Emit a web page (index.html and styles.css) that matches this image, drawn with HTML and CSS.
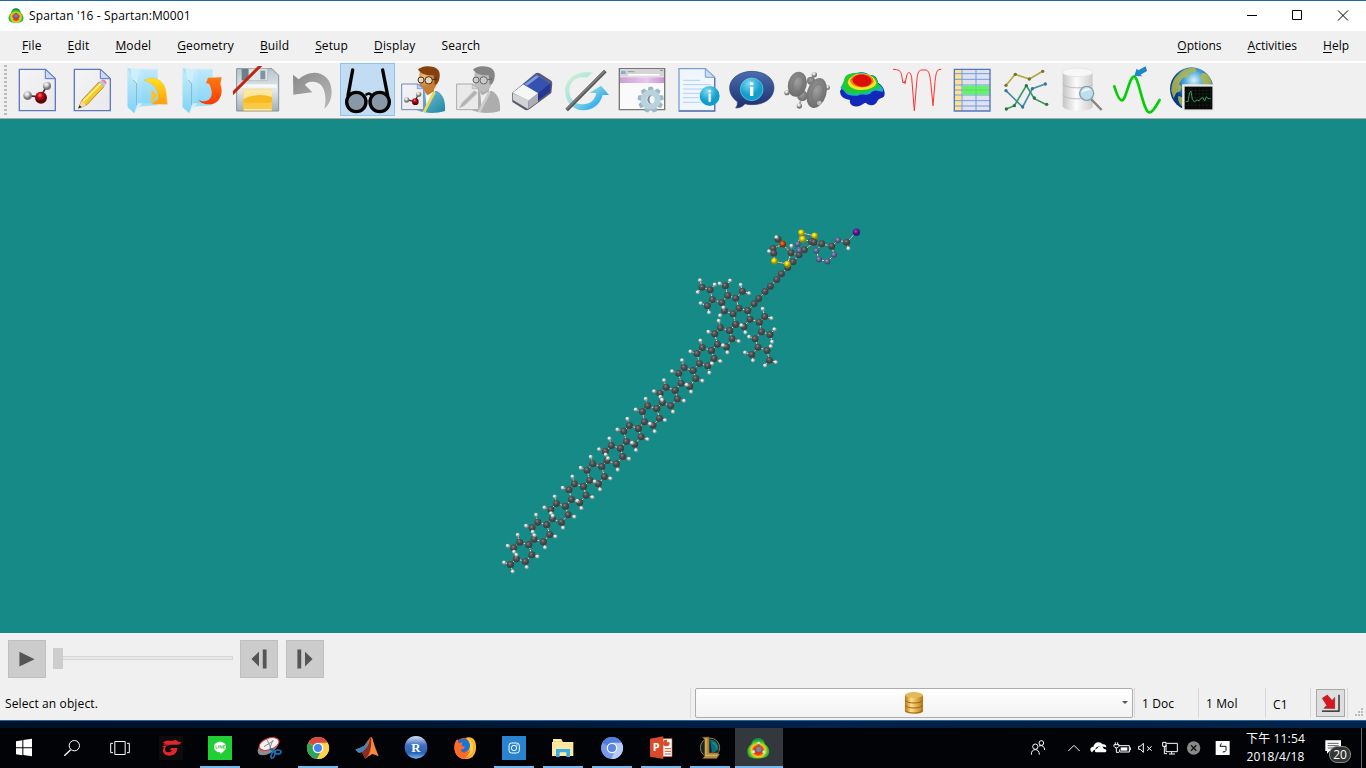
FILE: index.html
```html
<!DOCTYPE html>
<html lang="zh-Hant">
<head>
<meta charset="utf-8">
<title>Spartan '16 - Spartan:M0001</title>
<link rel="stylesheet" href="styles.css">
</head>
<body>
<svg class="defs" width="0" height="0" aria-hidden="true">
  <defs>
    <linearGradient id="paper" x1="0" y1="0" x2="1" y2="1"><stop offset="0" stop-color="#f4f4f6"/><stop offset="1" stop-color="#e9e9ed"/></linearGradient>
    <linearGradient id="folder" x1="0" y1="0" x2="0" y2="1"><stop offset="0" stop-color="#c9ecfa"/><stop offset="1" stop-color="#7fd3f8"/></linearGradient>
    <linearGradient id="yellow" x1="0" y1="0" x2="0" y2="1"><stop offset="0" stop-color="#ffe11a"/><stop offset="1" stop-color="#ff9c10"/></linearGradient>
    <linearGradient id="orange" x1="0" y1="0" x2="0" y2="1"><stop offset="0" stop-color="#ff7a10"/><stop offset="1" stop-color="#fb3a04"/></linearGradient>
    <linearGradient id="metal" x1="0" y1="0" x2="0" y2="1"><stop offset="0" stop-color="#b9c3ca"/><stop offset=".5" stop-color="#e3e9ec"/><stop offset="1" stop-color="#a4afb6"/></linearGradient>
    <linearGradient id="gray" x1="0" y1="0" x2="1" y2="1"><stop offset="0" stop-color="#898989"/><stop offset="1" stop-color="#b9b9b9"/></linearGradient>
    <linearGradient id="ring" x1="0" y1="0" x2="1" y2="1"><stop offset="0" stop-color="#d2f3d2"/><stop offset=".45" stop-color="#a6e2dc"/><stop offset=".75" stop-color="#3fb4ec"/><stop offset="1" stop-color="#37a9ea"/></linearGradient>
    <linearGradient id="barrel" x1="0" y1="0" x2="1" y2="0"><stop offset="0" stop-color="#c4c4c4"/><stop offset=".45" stop-color="#fcfcfc"/><stop offset="1" stop-color="#cdcdcd"/></linearGradient>
    <linearGradient id="gold" x1="0" y1="0" x2="1" y2="0"><stop offset="0" stop-color="#b87810"/><stop offset=".35" stop-color="#ffe08a"/><stop offset="1" stop-color="#b9750f"/></linearGradient>
    <linearGradient id="lilac" x1="0" y1="0" x2="1" y2="0"><stop offset="0" stop-color="#c8a0d2"/><stop offset=".6" stop-color="#eac6ee"/><stop offset="1" stop-color="#c994d0"/></linearGradient>
    <linearGradient id="shirt" x1="0" y1="0" x2="1" y2="1"><stop offset="0" stop-color="#7cc8d8"/><stop offset="1" stop-color="#1f86a4"/></linearGradient>
    <linearGradient id="bubble" x1="0" y1="0" x2="0" y2="1"><stop offset="0" stop-color="#4a6cae"/><stop offset="1" stop-color="#1d2f6e"/></linearGradient>
    <radialGradient id="ball" cx=".4" cy=".3"><stop offset="0" stop-color="#fff"/><stop offset=".5" stop-color="#ccc"/><stop offset="1" stop-color="#777"/></radialGradient>
    <radialGradient id="redball" cx=".4" cy=".3"><stop offset="0" stop-color="#f77"/><stop offset=".4" stop-color="#c8101a"/><stop offset="1" stop-color="#5f0008"/></radialGradient>
    <radialGradient id="face" cx=".3" cy=".3"><stop offset="0" stop-color="#f5bc75"/><stop offset="1" stop-color="#c87d33"/></radialGradient>
    <radialGradient id="info" cx=".4" cy=".25"><stop offset="0" stop-color="#7fdcf5"/><stop offset="1" stop-color="#119ecb"/></radialGradient>
    <radialGradient id="lobe" cx=".45" cy=".4" r=".6"><stop offset="0" stop-color="#a0a0a0"/><stop offset=".45" stop-color="#868686"/><stop offset="1" stop-color="#6c6c6c"/></radialGradient>
    <radialGradient id="globe" cx=".55" cy=".3"><stop offset="0" stop-color="#d9f4fb"/><stop offset=".45" stop-color="#49a4d8"/><stop offset="1" stop-color="#063b84"/></radialGradient>
    <radialGradient id="heat" cx=".5" cy=".6" r=".55"><stop offset="0" stop-color="#c8231a"/><stop offset=".38" stop-color="#e8401a"/><stop offset=".58" stop-color="#f2d21c"/><stop offset=".78" stop-color="#35c52a"/><stop offset="1" stop-color="#1a8a4a"/></radialGradient>
    <radialGradient id="c" cx=".4" cy=".35"><stop offset="0" stop-color="#8a8788"/><stop offset=".45" stop-color="#555"/><stop offset="1" stop-color="#3b4141"/></radialGradient>
    <radialGradient id="h" cx=".4" cy=".35"><stop offset="0" stop-color="#fff"/><stop offset=".5" stop-color="#dedada"/><stop offset="1" stop-color="#8b9696"/></radialGradient>
    <radialGradient id="n" cx=".4" cy=".35"><stop offset="0" stop-color="#9c9cc8"/><stop offset=".5" stop-color="#6a6a98"/><stop offset="1" stop-color="#444a6c"/></radialGradient>
    <radialGradient id="s" cx=".4" cy=".35"><stop offset="0" stop-color="#ffff9a"/><stop offset=".4" stop-color="#e9dc08"/><stop offset="1" stop-color="#8f8a08"/></radialGradient>
    <radialGradient id="p" cx=".4" cy=".35"><stop offset="0" stop-color="#f08040"/><stop offset=".5" stop-color="#cc4a0b"/><stop offset="1" stop-color="#7a2c08"/></radialGradient>
    <radialGradient id="i" cx=".4" cy=".35"><stop offset="0" stop-color="#a04ad0"/><stop offset=".5" stop-color="#6b1a9c"/><stop offset="1" stop-color="#3c1466"/></radialGradient>
    <linearGradient id="rblue" x1="0" y1="0" x2="0" y2="1"><stop offset="0" stop-color="#d4e2f6"/><stop offset=".4" stop-color="#3e70c0"/><stop offset=".75" stop-color="#2a62b8"/><stop offset="1" stop-color="#7cc0f4"/></linearGradient>
  </defs>
</svg>

<header class="titlebar">
  <svg class="app-icon" viewBox="0 0 48 48"><path d="M24 1c10 0 13 7 15 14 8 8 10 18 4 25-7 6-31 7-38 0-6-7-4-17 4-25C11 8 14 1 24 1z" fill="url(#heat)"/><path d="M24 14v12M24 25l-9 6M24 25l9 6" stroke="#4a4a5a" stroke-width="4"/><circle cx="24" cy="24" r="6" fill="#6688a0"/><circle cx="14" cy="31" r="3" fill="#bbb"/><circle cx="34" cy="31" r="3" fill="#bbb"/></svg>
  <h1 class="title">Spartan '16 - Spartan:M0001</h1>
  <svg class="window-controls" viewBox="0 0 138 30"><path d="M19 14.500h10M64.500 9.500h9v9h-9zM110 9.500l10 10M120 9.500l-10 10" fill="none" stroke="#000" stroke-width="1"/></svg>
</header>

<nav class="menubar">
  <span><u>F</u>ile</span><span><u>E</u>dit</span><span><u>M</u>odel</span><span><u>G</u>eometry</span><span><u>B</u>uild</span><span><u>S</u>etup</span><span><u>D</u>isplay</span><span>Sea<u>r</u>ch</span>
  <div class="menu-right"><span><u>O</u>ptions</span><span><u>A</u>ctivities</span><span><u>H</u>elp</span></div>
</nav>

<div class="toolbar">
  <div class="grip"></div>
  <svg class="tool" viewBox="30 189 165 159"><path d="M58 208h78l30 28v96H58z" fill="url(#paper)" stroke="#6078be" stroke-width="4"/><path d="M136 208v28h30z" fill="#c9dcf4" stroke="#6078be" stroke-width="3"/><path d="M84 287l38 4 18-33" stroke="#333" stroke-width="5" fill="none"/><circle cx="83" cy="287" r="13" fill="url(#ball)"/><circle cx="141" cy="258" r="12" fill="url(#ball)"/><circle cx="123" cy="293" r="18" fill="url(#redball)"/></svg>
  <svg class="tool" viewBox="195 189 165 159"><path d="M223 208h78l30 28v96h-108z" fill="url(#paper)" stroke="#6078be" stroke-width="4"/><path d="M301 208v28h30z" fill="#c9dcf4" stroke="#6078be" stroke-width="3"/><path d="M235 325l11-25 51-54 15 14-51 54z" fill="#f5ca28" stroke="#8f6a10" stroke-width="2"/><path d="M250 304l53-54" stroke="#ffef94" stroke-width="5"/><path d="M235 325l10-22 14 13z" fill="#f3d9ab"/><path d="M235 325l4-9 6 6z" fill="#222"/><path d="M297 246l7-6 14 13-7 8z" fill="#bfc5cc"/><path d="M304 240c6-6 20 4 14 13z" fill="#f17aa2"/></svg>
  <svg class="tool" viewBox="360 189 165 159"><path d="M383 205l42 4 47 1v106l-60 4-9 18-20-17z" fill="#a6def6"/><path d="M391 203l37 8-2 100-22 26z" fill="#d3f1fb" opacity=".85"/><path d="M383 206l17 35 10 10v68l-8 20-19-17z" fill="url(#folder)"/><path d="M420 206h53v104h-61V243z" fill="url(#folder)" opacity=".8"/><path d="M400 240l10 11v64" stroke="#55809c" stroke-width="1.500" fill="none"/><path d="M432 241c38-18 68 6 67 48l3 24-46-1 17-14c5-20-8-49-41-57z" fill="url(#yellow)" stroke="#f5ae1a" stroke-width="1"/><path d="M453 313l2-44 17 17z" fill="#ffc020"/></svg>
  <svg class="tool" viewBox="525 189 165 159"><path d="M548 205l42 4 47 1v106l-60 4-9 18-20-17z" fill="#a6def6"/><path d="M556 203l37 8-2 100-22 26z" fill="#d3f1fb" opacity=".85"/><path d="M548 206l17 35 10 10v68l-8 20-19-17z" fill="url(#folder)"/><path d="M585 206h53v104h-61V243z" fill="url(#folder)" opacity=".8"/><path d="M565 240l10 11v64" stroke="#55809c" stroke-width="1.500" fill="none"/><path d="M596 299c20 11 42 2 39-25-1-9-5-17-8-23l-9-1 6-17 41-1-4 20c12 31-5 62-33 61-18 0-29-7-32-14z" fill="url(#orange)"/></svg>
  <svg class="tool" viewBox="690 189 165 159"><path d="M710 206h106l20 20v107H710z" fill="url(#metal)" stroke="#84929a" stroke-width="3"/><path d="M746 206h57v36h-57z" fill="#dfe7ea" stroke="#a3afb6" stroke-width="2"/><path d="M781 212h15v26h-15z" fill="#8394a1"/><path d="M725 207v34h20v-34z" fill="#6b7e8a"/><path d="M716 253h114v10H716z" fill="#f6f8f9"/><path d="M730 268h86v64h-86z" fill="#f7ba20"/><path d="M730 268h86v23q-43-14-86 6z" fill="#ffe7a0"/><path d="M730 308h86v24h-86z" fill="#ffd65a" opacity=".6"/><path d="M733 329h81" stroke="#eee" stroke-width="3"/><path d="M699 273l75-75h13l-88 88z" fill="#c42414"/></svg>
  <svg class="tool" viewBox="855 189 165 159"><path d="M879 224l17 14c36-35 98-24 99 37 0 21-8 39-22 51 8-29 5-81-35-81-15 0-19 4-23 10l22 22-57 7z" fill="url(#gray)"/></svg>
  <svg class="tool selected" viewBox="15 9 165 159"><path d="M53 30L39 107M143 30l15 77" stroke="#000" stroke-width="10" stroke-linecap="round"/><path d="M92 105q10-8 17 0" fill="none" stroke="#000" stroke-width="8"/><g fill="#8898a6" stroke="#000" stroke-width="10"><circle cx="64" cy="126" r="29"/><circle cx="134" cy="126" r="29"/></g></svg>
  <svg class="tool" viewBox="180 9 165 159"><path d="M247 151c-2-27 9-48 24-58h35c19 10 26 33 24 60-25 8-57 8-83-2z" fill="url(#shirt)"/><path d="M270 88l30 6-25 52z" fill="#f8fcfc"/><path d="M294 95l8 3-30 58h-10z" fill="#eed55e"/><path d="M271 74h26v20l-20 12-9-13z" fill="#c5742c"/><path d="M254 35c20-16 52-8 54 14 1 23-10 45-24 47-21 2-34-17-32-38z" fill="url(#face)"/><path d="M249 29c9-12 45-15 60 0 8 8 7 30-3 43l-7 2-3-28c-15 0-32 1-47-17z" fill="#87410f"/><g fill="#f0d5b0" stroke="#333" stroke-width="3"><circle cx="258" cy="60" r="9"/><circle cx="281" cy="61" r="11"/><path d="M292 59l14-2"/></g><path d="M200 72h48l18 14v63h-66z" fill="url(#paper)" stroke="#7186c0" stroke-width="3"/><path d="M247 72v14h19z" fill="#bcd5ef" stroke="#7186c0" stroke-width="2"/><path d="M214 119l26 6 10-22" stroke="#333" stroke-width="4" fill="none"/><circle cx="215" cy="120" r="8" fill="url(#ball)"/><circle cx="251" cy="103" r="8" fill="url(#ball)"/><circle cx="241" cy="125" r="10" fill="url(#redball)"/></svg>
  <svg class="tool" viewBox="345 9 165 159"><path d="M412 151c-2-27 9-48 24-58h35c19 10 26 33 24 60-25 8-57 8-83-2z" fill="#adadad"/><path d="M435 88l30 6-25 52z" fill="#eee"/><path d="M459 95l8 3-30 58h-10z" fill="#ccc"/><path d="M436 74h26v20l-20 12-9-13z" fill="#aaa"/><path d="M419 35c20-16 52-8 54 14 1 23-10 45-24 47-21 2-34-17-32-38z" fill="#bdbdbd"/><path d="M414 29c9-12 45-15 60 0 8 8 7 30-3 43l-7 2-3-28c-15 0-32 1-47-17z" fill="#858585"/><g fill="#ccc" stroke="#666" stroke-width="3"><circle cx="423" cy="60" r="9"/><circle cx="446" cy="61" r="11"/><path d="M457 59l14-2"/></g><path d="M365 72h48l18 14v63h-66z" fill="#e9e9e9" stroke="#aaa" stroke-width="3"/><path d="M412 72v14h19z" fill="#d5d5d5" stroke="#aaa" stroke-width="2"/><path d="M374 143l6-15 38-37 10 9-40 38z" fill="#bdbdbd"/><path d="M374 143l49-48" stroke="#929292" stroke-width="2"/></svg>
  <svg class="tool" viewBox="510 9 165 159"><path d="M531 99l69-58q7-5 14-1l35 22q4 4 2 18l-2 19-65 48q-9 7-17 1l-35-22z" fill="#595d70"/><path d="M535 97l69-54 43 26-66 51z" fill="#4e6fc9"/><path d="M581 121l66-52-2 26-66 49z" fill="#243594"/><path d="M533 98l32-25 45 27-29 22z" fill="#f6f6f6"/><path d="M533 99l48 22-2 26-45-27z" fill="#d3d3d3"/><path d="M581 121l28-21v26l-30 21z" fill="#aeafb4"/><path d="M565 73l38-29 42 26-35 29z" fill="#3552ae"/><path d="M568 73l36-27 8 4-36 27z" fill="#8298da"/></svg>
  <svg class="tool" viewBox="675 9 165 159"><path d="M772 38l-16 15c-66-14-71 79-13 80 24 0 37-14 41-34h-21l35-22 24 28h-19c-8 30-31 47-61 46-72-6-74-128 30-113z" fill="url(#ring)"/><path d="M695 150L811 33" stroke="#505050" stroke-width="11"/><path d="M695 147L809 33" stroke="#7c7c7c" stroke-width="6"/></svg>
  <svg class="tool" viewBox="15 9 165 159"><path d="M28 26h136v123H28z" fill="#fafafa" stroke="#777" stroke-width="4"/><path d="M30 28h132v22H30z" fill="#d5d5d5"/><path d="M54 42h94v5H54z" fill="#fff"/><path d="M33 33h14v9H33z" fill="#8da8db"/><path d="M53 35h20" stroke="#999" stroke-width="3"/><path d="M150 31h9" stroke="#888" stroke-width="3"/><path d="M30 52h132v17H30z" fill="url(#lilac)"/><g transform="translate(122 119)"><g fill="#9bb8c6"><path id="tooth" d="M-6-39h12l3 11H-9z"/><use href="#tooth" transform="rotate(40)"/><use href="#tooth" transform="rotate(80)"/><use href="#tooth" transform="rotate(120)"/><use href="#tooth" transform="rotate(160)"/><use href="#tooth" transform="rotate(200)"/><use href="#tooth" transform="rotate(240)"/><use href="#tooth" transform="rotate(280)"/><use href="#tooth" transform="rotate(320)"/></g><circle r="21" fill="#eef7fa" stroke="#b9d2dc" stroke-width="18"/><path d="M3-13a13 13 0 000 26c-9-5-9-20 0-26z" fill="#6f8897"/></g></svg>
  <svg class="tool" viewBox="180 9 165 159"><path d="M207 26h79l28 26v101H207z" fill="#eff6fd" stroke="#7ba1d4" stroke-width="4"/><path d="M207 153h107V53" fill="none" stroke="#6779b5" stroke-width="4"/><path d="M286 26v26h28z" fill="#c6dcf7" stroke="#7ba1d4" stroke-width="3"/><path d="M219 61h52M219 74h82M219 87h82M219 100h55M219 113h47M219 127h52" stroke="#b5cfee" stroke-width="3"/><circle cx="299" cy="108" r="30" fill="url(#info)"/><path d="M296 101h6v24h-6zM296 90h6v7h-6z" stroke="#fff" stroke-width="1" fill="#fff"/></svg>
  <svg class="tool" viewBox="345 9 165 159"><path d="M426 34c38 0 66 21 66 49 0 30-28 52-66 51-9 0-15-1-21-3q-10 13-28 13 7-9 5-19c-14-10-23-24-23-41 0-29 30-50 67-50z" fill="url(#bubble)" stroke="#2c437e" stroke-width="2"/><circle cx="425" cy="88" r="34" fill="url(#info)" stroke="#6fd6ed" stroke-width="2"/><path d="M420 80h10v28h-10zM420 67h10v8h-10z" fill="#fff"/></svg>
  <svg class="tool" viewBox="510 9 165 159"><path d="M533 98l14-6M568 137l4-14M613 46l-6 12M640 86l12-3" stroke="#aaa" stroke-width="6"/><g fill="url(#ball)"><circle cx="531" cy="98" r="8"/><circle cx="613" cy="44" r="8"/><circle cx="568" cy="138" r="8"/><circle cx="653" cy="83" r="7"/></g><circle cx="577" cy="107" r="16" fill="url(#lobe)"/><circle cx="603" cy="62" r="12" fill="url(#lobe)"/><ellipse cx="562" cy="73" rx="28" ry="38" transform="rotate(14 562 73)" fill="url(#lobe)"/><ellipse cx="620" cy="99" rx="29" ry="46" transform="rotate(17 620 99)" fill="url(#lobe)"/><ellipse cx="564" cy="72" rx="15" ry="24" transform="rotate(14 564 72)" fill="none" stroke="#717171" stroke-width="2"/><ellipse cx="622" cy="98" rx="16" ry="27" transform="rotate(17 622 98)" fill="none" stroke="#717171" stroke-width="2"/><circle cx="628" cy="129" r="7" fill="#bbb"/></svg>
  <svg class="tool" viewBox="675 9 165 159"><path d="M690 94c8-13 13-25 16-42 14-12 24-12 36-13 15-5 28 0 34 5 18 1 24 5 29 25 15 8 22 28 18 38-5 9-12 5-19 13-7 19-24 19-36 9-8-1-12 8-24 10-17 3-27-8-24-19-17-3-29-8-30-26z" fill="#1228bb"/><path d="M691 84c9-17 14-27 20-33 23-15 45-17 65-7 17 2 25 14 28 27 15 10 17 15 14 25-14-4-26-10-38 5-14 7-25-2-36 6-18 1-36-1-41-14z" fill="#14b8b4"/><path d="M697 84c5-19 4-33 15-40 28-12 53 0 78 3 14 8 12 23 20 38-22-3-32 12-54 14-23 4-49 1-59-15z" fill="#20cb31"/><path d="M713 68c5-34 74-39 86-1 1 14-23 23-44 23-21 1-39-9-42-22z" fill="#f2e523"/><path d="M720 62c6-28 70-26 71 2-6 23-62 26-71-2z" fill="#f17c13"/><path d="M727 59c8-23 54-20 58 4-3 23-52 24-58-4z" fill="#dc0e08"/></svg>
  <svg class="tool" viewBox="15 9 165 159"><path d="M24 28c18 1 23 3 26 18l4 23 4-5 2 7 6-28c5-10 12-5 14 9l8 100 8-96c3-27 9-27 24-26 13-1 15 17 18 45l6 62 6-72c4-35 7-37 19-37" fill="none" stroke="#ff3030" stroke-width="3"/></svg>
  <svg class="tool" viewBox="180 9 165 159"><path d="M208 28h108v125H208z" fill="#eee"/><path d="M208 28h23v125h-23z" fill="#ffe291"/><path d="M232 28h84v125h-84z" fill="#dfe2ec"/><path d="M208 41h108M208 58h108M208 75h108M208 90h108M208 105h108M208 122h108M208 138h108M231 28v125M273 28v125" fill="none" stroke="#6e9ce2" stroke-width="3"/><path d="M233 77h80v27h-80z" fill="#68ef6b"/><path d="M233 90h80M273 77v27" stroke="#4fd66a" stroke-width="2"/><path d="M208 28h107v125H208z" fill="none" stroke="#5874bc" stroke-width="4"/></svg>
  <svg class="tool" viewBox="345 9 165 159"><g fill="none" stroke-width="5"><path d="M363 76l28-33 42 14 40-23" stroke="#b8a544"/><path d="M363 92l50 49 29-55 39-14" stroke="#4c8ba9"/><path d="M364 147l24-10 36-60 24 39 37 18" stroke="#3c9660"/></g><g fill="#76712f"><circle cx="363" cy="76" r="5"/><circle cx="391" cy="43" r="5"/><circle cx="433" cy="57" r="5"/><circle cx="473" cy="34" r="5"/></g><g fill="#337695"><circle cx="363" cy="92" r="5"/><circle cx="413" cy="141" r="5"/><circle cx="442" cy="86" r="5"/><circle cx="481" cy="72" r="5"/></g><g fill="#277447"><circle cx="364" cy="147" r="5"/><circle cx="388" cy="137" r="5"/><circle cx="424" cy="77" r="5"/><circle cx="448" cy="114" r="5"/><circle cx="485" cy="133" r="5"/></g></svg>
  <svg class="tool" viewBox="510 9 165 159"><path d="M533 37v102c5 18 88 18 90 0V37z" fill="url(#barrel)"/><ellipse cx="578" cy="37" rx="46" ry="13" fill="#f7f7f7" stroke="#ddd" stroke-width="2"/><path d="M533 73c12 14 77 14 90 0M533 106c12 14 77 14 90 0" fill="none" stroke="#bdbdbd" stroke-width="3"/><path d="M619 118l31 32" stroke="#858585" stroke-width="7"/><circle cx="605" cy="100" r="21" fill="#bbdfef" stroke="#8b9ba5" stroke-width="4"/><path d="M590 98c2-12 22-18 28-8q-10-1-28 8z" fill="#edf9fd"/></svg>
  <svg class="tool" viewBox="675 9 165 159"><path d="M688 79c8 27 15 42 23 42 12 0 22-71 36-71 15 0 27 106 46 107 12 1 22-23 31-37" fill="none" stroke="#04ce08" stroke-width="8" stroke-linecap="round"/><path d="M748 48l7-22 5 5 22-12 4 14-20 11 7 5z" fill="#1786cb"/></svg>
  <svg class="tool" viewBox="840 9 165 159"><circle cx="920" cy="87" r="65" fill="url(#globe)"/><path d="M878 46c13-18 35-25 54-21l2 10-21 5-6 12-14 2-11 17 8 10-4 13-12 4-8 17-7-22c0-20 7-38 19-47zM947 42c13-10 30 6 34 29l-27 2-6-15zM880 107l22 9 2 30c-15-6-28-20-24-39z" fill="#b3b94c" opacity=".85"/><path d="M894 75h93v78h-93z" fill="#ddd" stroke="#ededed" stroke-width="5"/><path d="M899 80h83v68h-83z" fill="#070707"/><path d="M910 80v68M921 80v68M932 80v68M943 80v68M954 80v68M965 80v68M976 80v68M899 91h83M899 102h83M899 113h83M899 124h83M899 135h83" stroke="#183c22" stroke-width="1"/><path d="M902 125h7l5-28 4-4 4 25 6 7 8-5 7 2 6-8 5-1 5 10 5-13 5 6h8" stroke="#3a9c68" stroke-width="3" fill="none"/></svg>
</div>

<main class="viewport">
  <svg class="scene" id="scene" viewBox="0 119 1366 514"></svg>
</main>

<section class="player">
  <svg class="key" viewBox="24 30 114 114"><path d="M57 64v47l48-23z" fill="#555"/></svg>
  <div class="slider"><div class="track"></div><div class="thumb"></div></div>
  <svg class="key back" viewBox="720 30 114 114"><path d="M777 64v47l-24-24zM789 57h12v60h-12z" fill="#555"/></svg>
  <svg class="key" viewBox="858 30 114 114"><path d="M915 64v47l24-24zM891 57h12v60h-12z" fill="#555"/></svg>
</section>

<footer class="statusbar">
  <div class="message">Select an object.</div>
  <div class="combo"><svg class="coins" viewBox="0 0 20 24"><path d="M1 4v16c0 4 18 4 18 0V4z" fill="url(#gold)"/><ellipse cx="10" cy="4" rx="9" ry="3" fill="#e4b85b"/><path d="M1 9c2 4 16 4 18 0M1 14c2 4 16 4 18 0M1 19c2 4 16 4 18 0" fill="none" stroke="#9c6515"/></svg><span class="caret"></span></div>
  <div class="cell doc">1 Doc</div>
  <div class="cell mol">1 Mol</div>
  <div class="cell sym">C1</div>
  <div class="cell last"><svg class="corner" viewBox="888 27 87 84"><path d="M904 95h55V42" fill="none" stroke="#111" stroke-width="4"/><path d="M905 54l16-11 16 18 8-10v36l-35-1 10-9z" fill="#d8161e" stroke="#76050a" stroke-width="1.500"/></svg></div>
  <svg class="size-grip" viewBox="0 0 9 9"><path d="M6 0h2v2H6zM3 3h2v2H3zM6 3h2v2H6zM0 6h2v2H0zM3 6h2v2H3zM6 6h2v2H6z" fill="#bcbcbc"/></svg>
</footer>

<div class="wallpaper"></div>
<div class="taskbar">
  <svg class="task" viewBox="0 24 144 120"><path d="M48 64l19-3v21H48zM70 60l26-4v26H70zM48 85h19v21l-19-3zM70 85h26v24l-26-4z" fill="#fff"/></svg>
  <svg class="task" viewBox="144 24 144 120"><path d="M212 89l-19 18" stroke="#fff" stroke-width="4"/><circle cx="223" cy="77" r="15.500" fill="none" stroke="#fff" stroke-width="3"/></svg>
  <svg class="task" viewBox="288 24 144 120"><path d="M344.500 64.500h31v39h-31zM339 70h-7v28h7M381 70h7v28h-7" fill="none" stroke="#fff" stroke-width="3"/></svg>
  <div class="task-gap"></div>
  <svg class="task" viewBox="441 24 144 120"><path d="M477 48h72v72h-72z" fill="#0d0b0b"/><path d="M487 68q12-9 27-5l14-3 8 6 9-1-8 9h-28q-14 3-14 14 0 9 10 9 8 0 12-7l-9 1 6-7h18q0 15-13 21-16 6-26-3-8-9-1-20l-6-2 8-4-6-4 9-3z" fill="#e1252b"/><path d="M488 75h14M535 73l-8 7h-16" stroke="#0d0b0b" stroke-width="2" fill="none"/></svg>
  <svg class="task open" viewBox="588 24 144 120"><path d="M624 48h72v72h-72z" fill="#20cf33"/><path d="M660 65c11 0 18 7 18 16 0 8-8 14-16 21l-2-5c-10 0-18-7-18-16s8-16 18-16z" fill="#fff"/><path d="M648 76v9h5M656 76v9M660 85v-9l6 9v-9M675 76h-5v9h5M670 80h4" fill="none" stroke="#20b933" stroke-width="2"/></svg>
  <svg class="task" viewBox="735 24 144 120"><path d="M773 93q5-29 33-38 23-5 32 7 2 6-9 21-17 22-41 23-15 0-15-13z" fill="#8b8c91"/><ellipse cx="807" cy="72" rx="31" ry="17" transform="rotate(-20 807 72)" fill="#f2f2f2" stroke="#d93636" stroke-width="3"/><path d="M792 80l29-18M800 57l17 37M818 61l-11 31" stroke="#888" stroke-width="3"/><path d="M810 87l17 7" stroke="#126bad" stroke-width="6"/><ellipse cx="819" cy="105" rx="5" ry="10" transform="rotate(20 819 105)" fill="none" stroke="#1674b5" stroke-width="5"/><ellipse cx="834" cy="96" rx="9" ry="6" fill="none" stroke="#1674b5" stroke-width="5"/></svg>
  <svg class="task open" viewBox="882 24 144 120"><circle cx="954" cy="84" r="33" fill="#fbd14a"/><path d="M954 84L925 68a33 33 0 0158 0z" fill="#db493c"/><path d="M954 84l29-16H954z" fill="#db493c"/><path d="M925 68a33 33 0 0026 49l14-25z" fill="#2fa35b"/><path d="M965 92l-14 25a33 33 0 0032-49h-24z" fill="#fcd24b"/><circle cx="954" cy="84" r="16" fill="#fff"/><circle cx="954" cy="84" r="12" fill="#4484ed"/></svg>
  <svg class="task" viewBox="9 39 144 120"><path d="M46 104l26-11 19-27q7-2 9 15l16 43q-15-8-21-7l-19 14-10-19-10 1z" fill="#de642b"/><path d="M46 104l26-11 14-18-10 34-10 2-10 2z" fill="#3a85b9"/><path d="M91 66q-3 30-25 46l10 19q17-12 19-62z" fill="#8c2b22"/><path d="M93 67q4 30-6 57l9-7q9 0 19 7-13-26-17-49z" fill="#f28b3d"/></svg>
  <svg class="task" viewBox="156 39 144 120"><circle cx="228" cy="97" r="34" fill="url(#rblue)"/><text x="214" y="111" class="r-letter">R</text></svg>
  <svg class="task" viewBox="303 39 144 120"><circle cx="375" cy="100" r="32" fill="#f8432d"/><path d="M378 68q32-7 30 34-3 30-32 30-25-1-31-25 11 17 27 10 29-15 6-49z" fill="#ffb52d"/><circle cx="370" cy="91" r="20" fill="#1675d8"/><path d="M343 101q-1-20 9-29l5 13 10-3-2 10 10 3-5 8-9 1q7 15 24 6 13-10 10-26 10 16 4 28-10 21-31 19-21-7-25-30z" fill="#ff6a2a"/><path d="M380 66q25 18 20 42-7 17-23 20 27-25 3-62z" fill="#ffd342"/></svg>
  <svg class="task open" viewBox="450 39 144 120"><path d="M486 63h72v72h-72z" fill="#2884ce"/><rect x="507" y="84" width="31" height="30" rx="8" fill="none" stroke="#fff" stroke-width="3"/><circle cx="522" cy="99" r="8" fill="none" stroke="#fff" stroke-width="3"/><circle cx="531" cy="90" r="2" fill="#fff"/></svg>
  <svg class="task open" viewBox="597 39 144 120"><path d="M639 72h25l5 9h30v42h-60z" fill="#f9d76e"/><path d="M636 81h64v42h-64z" fill="#ffe7a0"/><path d="M641 73h22v5h-22z" fill="#fff1bf"/><path d="M648 102h42v24h-11v-14h-20v14h-11z" fill="#35aee5"/></svg>
  <svg class="task open" viewBox="744 39 144 120"><circle cx="816" cy="99" r="33" fill="#779be9"/><path d="M816 99l-29-16a33 33 0 0158 0h-29z" fill="#537dda"/><path d="M826 106l-12 26a33 33 0 0031-49h-26z" fill="#b6ccf6"/><circle cx="816" cy="99" r="16" fill="#f2f5fa"/><circle cx="816" cy="99" r="12" fill="#5b88de"/></svg>
  <svg class="task open" viewBox="891 39 144 120"><path d="M965 71h31v54h-31z" fill="#fff" stroke="#d34f31" stroke-width="2"/><path d="M974 101h19M974 109h19M974 117h19" stroke="#d25435" stroke-width="3"/><circle cx="979" cy="84" r="10" fill="#d54d2e"/><path d="M981 82V72q10 1 10 10z" fill="#fff"/><path d="M930 71l40-7v68l-40-7z" fill="#d84a2a"/><text x="938" y="109" class="p-letter">P</text></svg>
  <svg class="task open" viewBox="1038 39 144 120"><circle cx="1110" cy="98" r="29" fill="#08242b" stroke="#9b793d" stroke-width="3"/><path d="M1110 74a24 24 0 0124 31l-18 12z" fill="#0b6c79"/><path d="M1117 83q12 5 13 18" fill="none" stroke="#278f94" stroke-width="4"/><path d="M1087 66h21v47h24l7 5-9 13h-43l6-7V74z" fill="#b18a44" stroke="#4a3515" stroke-width="2"/><path d="M1098 70v54M1099 121h32" stroke="#e0bd69" stroke-width="3"/></svg>
  <svg class="task open active" viewBox="1185 39 144 120"><path d="M1255 69c14 0 18 10 20 19 13 8 17 24 8 35-9 9-46 10-56 2-9-12-6-28 7-37 2-9 7-19 21-19z" fill="url(#heat)"/><path d="M1256 82v22l-16 7M1256 104l16 8" fill="none" stroke="#71626a" stroke-width="5"/><g fill="#deded9"><circle cx="1256" cy="84" r="4"/><circle cx="1240" cy="110" r="5"/><circle cx="1272" cy="111" r="5"/></g><circle cx="1256" cy="103" r="8" fill="#708b99"/></svg>
  <div class="tray">
    <svg class="tray-people" viewBox="0 144 108 120"><g fill="none" stroke="#fff" stroke-width="3"><circle cx="46" cy="200" r="8"/><path d="M34 224q0-15 12-15t12 15"/><circle cx="64" cy="189" r="7"/><path d="M57 198q15-5 17 12"/></g></svg>
    <svg class="tray-icon" viewBox="126 144 72 120"><path d="M145 213l17-17 17 17" fill="none" stroke="#fff" stroke-width="3"/></svg>
    <svg class="tray-icon" viewBox="198 144 72 120"><path d="M218 217c-10-3-9-17 2-17 2-13 19-19 28-7 8-1 12 4 11 9-4 0-8-4-15-1-9-4-17 0-18 8-6 1-9 4-8 8z" fill="#fff"/><path d="M228 217c-6-4-3-11 3-11 4-9 18-8 21 1 9-1 10 10 1 10z" fill="#fff"/></svg>
    <svg class="tray-icon" viewBox="270 144 72 120"><path d="M296 197h32v19h-29v-8M328 203h3v7h-3" fill="none" stroke="#fff" stroke-width="3"/><path d="M302 202h20v10h-20z" fill="#fff"/><path d="M286 187v7M293 187v7M282 194h15v5q-3 5-8 5-5-1-7-5zM289 203v14h8" fill="none" stroke="#fff" stroke-width="3"/></svg>
    <svg class="tray-icon" viewBox="342 144 72 120"><path d="M356 199h5l9-9v27l-9-9h-5zM381 199l14 13M395 199l-14 13" fill="none" stroke="#fff" stroke-width="3"/></svg>
    <svg class="tray-icon" viewBox="414 144 72 120"><path d="M438 195v20h34v-25h-32M455 215v7M447 222h18M428 187h10v12h-10zM433 199v22h8" fill="none" stroke="#fff" stroke-width="3"/></svg>
    <svg class="tray-icon" viewBox="484 144 72 120"><circle cx="519" cy="204" r="20" fill="#8a8a8a"/><path d="M511 196l16 16M527 196l-16 16" stroke="#111" stroke-width="4"/></svg>
    <svg class="tray-ime" viewBox="556 144 96 120"><path d="M585 183h42v42h-42z" fill="#fff"/><path d="M602 190l-4 9h18v12q0 5-10 5" fill="none" stroke="#111" stroke-width="3"/></svg>
    <div class="clock"><span>下午 11:54</span><span>2018/4/18</span></div>
    <div class="notice"><svg viewBox="879 144 144 120"><path d="M916 181h47v32h-34l-8 8v-8h-5z" fill="#fff"/><path d="M923 190h33M923 197h33M923 204h20" stroke="#111" stroke-width="2"/></svg><span class="badge">20</span></div>
  </div>
</div>
<script src="molecule.js"></script>
</body>
</html>
```

FILE: molecule.js
```js
// Ball-and-wire model. Each fragment has its own origin and a 1/3 scale.
// Atoms: [element, x, y]; a third list holds hydrogens as [x, y, parentIndex].
const NS = 'http://www.w3.org/2000/svg';
const scene = document.getElementById('scene');
const radius = { c: 10.5, h: 6.2, n: 9, s: 10, p: 10, i: 11 };

function el(parent, name, attrs) {
  const node = document.createElementNS(NS, name);
  for (const key in attrs) node.setAttribute(key, attrs[key]);
  parent.appendChild(node);
  return node;
}

function fragment(x, y, atoms, bonds) {
  const g = el(scene, 'g', { transform: `translate(${x + .4} ${y + .2}) scale(.33333)` });
  for (const [a, b] of bonds) {
    const pos = { x1: atoms[a][1], y1: atoms[a][2], x2: atoms[b][1], y2: atoms[b][2] };
    el(g, 'line', { ...pos, stroke: '#4d5c5c', 'stroke-width': 4.5 });
    el(g, 'line', { ...pos, stroke: '#e2e8e8', 'stroke-width': 3, 'stroke-dasharray': '7 2' });
  }
  for (const [kind, cx, cy] of atoms) el(g, 'circle', { cx, cy, r: radius[kind], fill: `url(#${kind})` });
}

// Six carbons in order, hydrogens [x, y, parent], and the link to the next ring.
function ring(x, y, carbons, hydrogens, next) {
  const atoms = carbons.map(([a, b]) => ['c', a, b]);
  const bonds = [[0, 1], [1, 2], [2, 3], [3, 4], [4, 5], [5, 0]];
  for (const [a, b, parent] of hydrogens) {
    bonds.push([atoms.length, parent]);
    atoms.push(['h', a, b]);
  }
  if (next) {
    bonds.push([3, atoms.length]);
    atoms.push(['c', next[0], next[1]]);
  }
  fragment(x, y, atoms, bonds);
}

// Head group
fragment(680, 220, [
  ['c',293,57],['p',307,72],['c',278,85],['c',280,99],['s',282,123],['s',321,132],['c',332,98],
  ['h',288,51],['h',266,93],['h',333,77],['c',322,142],['c',338,125],['c',356,104],['n',357,91],
  ['n',352,72],['s',363,38],['s',403,47],['c',393,64],['s',367,57],['c',372,89],['c',401,66],
  ['c',424,71],['c',454,78],['n',473,60],['c',499,66],['h',504,85],['i',528,36],['n',408,92],
  ['n',416,118],['n',441,124],['n',461,104],['c',303,161],['c',289,178],['c',270,198],
  ['c',254,214],['c',235,235],['c',221,251],['c',202,271],['s',321,132]
], [[0,1],[1,2],[2,3],[3,4],[4,5],[5,6],[6,1],[7,0],[8,3],[9,6],[6,12],[5,10],[10,11],[11,12],
  [12,13],[13,14],[14,18],[14,15],[15,16],[16,17],[17,18],[12,19],[19,20],[20,21],[21,22],
  [22,23],[23,24],[24,25],[24,26],[21,27],[27,28],[28,29],[29,30],[30,22],[10,31],[31,32],
  [32,33],[33,34],[34,35],[35,36],[36,37]]);

// Cross guard
fragment(680, 220, [
  ['c',202,271],['c',176,264],['c',158,281],['c',166,312],['c',191,319],['c',209,297],
  ['c',166,234],['c',186,213],['h',181,194],['h',206,219],
  ['c',142,226],['c',135,197],['h',118,190],['h',149,181],
  ['c',124,247],['c',96,238],['c',89,209],['h',103,193],['c',65,201],['h',59,180],['h',52,216],
  ['c',81,257],['h',61,249],['h',86,277],['c',132,272],['h',129,262],['h',119,286],
  ['c',237,306],['c',253,289],['h',247,266],['h',273,294],
  ['c',243,335],['c',269,343],['h',282,327],['h',275,365],
  ['c',224,356],['h',206,350],['c',233,381],['c',214,403],['h',194,397],['h',218,421],
  ['c',260,391],['h',271,378],['c',267,420],['h',254,436],['h',286,426],['h',183,315],['h',195,337]
], [[0,1],[1,2],[2,3],[3,4],[4,5],[5,0],[1,6],[6,7],[7,8],[7,9],[6,10],[10,11],[11,12],[11,13],
  [10,14],[14,15],[15,16],[16,17],[16,18],[18,19],[18,20],[15,21],[21,22],[21,23],[2,24],
  [24,25],[24,26],[5,27],[27,28],[28,29],[28,30],[27,31],[31,32],[32,33],[32,34],[31,35],
  [35,36],[35,37],[37,38],[38,39],[38,40],[37,41],[41,42],[41,43],[43,44],[43,45],[4,46],[4,47]]);

// Blade
ring(680, 220, [[148,331],[120,323],[103,341],[111,372],[138,380],[155,356]], [[115,302,1],[84,335,2],[128,375,4],[141,397,4],[175,363,5]], [93,391]);
fragment(680, 220, [['c',148,331],['c',166,312]], [[0,1]]);
ring(620, 320, [[273,91],[246,82],[230,100],[237,130],[262,137],[281,115]], [[240,61,1],[210,94,2],[275,130,4],[267,158,4],[300,123,5]], [218,151]);
ring(620, 320, [[218,151],[191,142],[175,159],[182,189],[208,198],[226,175]], [[185,120,1],[155,153,2],[199,194,4],[212,215,4],[246,182,5]], [164,210]);
ring(620, 320, [[164,210],[137,201],[119,219],[126,247],[151,257],[171,236]], [[131,180,1],[101,213,2],[120,230,2],[125,239,3],[158,275,4],[191,242,5]], [109,265]);
ring(620, 320, [[109,265],[82,257],[66,274],[72,305],[98,315],[117,294]], [[76,236,1],[46,268,2],[89,311,4],[103,334,4],[134,300,5]], [54,325]);
ring(490, 420, [[444,25],[417,16],[400,33],[408,64],[433,72],[452,50]], [[411,-4,1],[381,28,2],[425,68,4],[437,90,4],[471,57,5]], [390,84]);
ring(490, 420, [[390,84],[363,76],[345,93],[350,121],[378,131],[397,109]], [[357,55,1],[326,87,2],[346,103,2],[353,114,3],[382,149,4],[416,116,5]], [334,139]);
ring(490, 420, [[334,139],[307,131],[290,150],[298,180],[324,191],[342,169]], [[301,110,1],[271,143,2],[313,184,4],[329,208,4],[360,175,5]], [279,199]);
ring(490, 420, [[279,199],[252,191],[236,209],[243,238],[268,247],[287,225]], [[246,169,1],[217,203,2],[261,242,4],[273,264,4],[306,231,5]], [225,258]);
ring(490, 420, [[225,258],[198,250],[181,268],[186,296],[213,306],[233,284]], [[193,229,1],[162,262,2],[182,279,2],[187,287,3],[218,323,4],[252,290,5]], [169,314]);
ring(490, 420, [[169,314],[142,306],[125,323],[131,357],[159,365],[178,343]], [[137,284,1],[107,317,2],[127,335,2],[132,345,3],[164,382,4],[195,349,5]], [115,374]);
ring(490, 420, [[115,374],[88,366],[70,383],[78,416],[105,424],[124,404]], [[82,344,1],[52,377,2],[71,395,2],[78,404,3],[109,441,4],[141,409,5]], [60,433]);
fragment(490, 420, [['c',60,433],['h',41,427],['h',67,454]], [[0,1],[0,2]]);
```

FILE: styles.css
```css
* { box-sizing: border-box; }
body {
  margin: 0;
  width: 1366px;
  height: 768px;
  overflow: hidden;
  display: flex;
  flex-direction: column;
  background: #f0f0f0;
  color: #000;
  font-family: "Open Sans", "Noto Sans CJK TC", sans-serif;
  font-size: 12px;
}
svg { display: block; flex: none; }
.defs { position: absolute; }

.titlebar { flex: none; height: 31px; display: flex; align-items: center; background: #fff; border-top: 1px solid #1a69a8; padding-left: 8px; }
.app-icon { width: 16px; height: 16px; }
.title { margin: 0 auto 0 5px; font-size: 12px; font-weight: 400; line-height: 30px; letter-spacing: .12px; }
.window-controls { width: 138px; height: 30px; }

.menubar { flex: none; height: 31px; display: flex; gap: 26px; padding: 0 17px 0 22px; line-height: 30px; letter-spacing: .13px; border-bottom: 1px solid #fff; }
.menubar u { text-underline-offset: 2px; }
.menu-right { display: flex; gap: 26px; margin-left: auto; letter-spacing: 0; }

.toolbar { flex: none; height: 57px; display: flex; border-top: 1px solid #fafafa; border-bottom: 1px solid #a9a9a9; }
.grip { width: 3px; height: 50px; margin: 2px 3px 0 4px; background: repeating-linear-gradient(#bcbcbc 0 2px, transparent 2px 4px); }
.tool { width: 55px; height: 53px; }
.selected { background: #c1dcf3; outline: 1px solid #90c4ed; outline-offset: -1px; }

.viewport { flex: none; height: 514px; background: #168a87; }
.scene { width: 1366px; height: 514px; }

.player { flex: none; height: 53px; display: flex; align-items: flex-start; padding: 7px 0 0 8px; }
.key { width: 38px; height: 38px; background: #ccc; border: 1px solid #bfbfbf; }
.key.back { margin-right: 8px; }
.slider { display: grid; align-items: center; width: 180px; height: 36px; margin: 0 7px; }
.track, .thumb { grid-area: 1 / 1; }
.track { height: 4px; background: #e7eaea; border: 1px solid #d6d6d6; }
.thumb { width: 10px; height: 21px; background: #cdcdcd; }

.statusbar { flex: none; height: 34px; display: flex; align-items: center; }
.message { width: 691px; height: 30px; line-height: 32px; padding-left: 5px; letter-spacing: .12px; border-right: 1px solid #d9d9d9; }
.combo { width: 438px; height: 30px; margin: 0 1px 0 4px; display: flex; align-items: center; justify-content: center; background: linear-gradient(#fff, #f2f2f2); border: 1px solid #adadad; border-radius: 2px; position: relative; }
.coins { width: 20px; height: 24px; }
.caret { position: absolute; right: 4px; top: 12px; border: 3px solid transparent; border-top-color: #555; }
.cell { height: 30px; line-height: 32px; border-left: 1px solid #d9d9d9; padding-left: 7px; letter-spacing: .1px; }
.doc { width: 64px; }
.mol { width: 67px; }
.sym { width: 45px; line-height: 33px; }
.last { width: 38px; padding: 1px 4px 0 5px; border-right: 1px solid #d9d9d9; }
.corner { width: 29px; height: 28px; background: #dedede; border: 1px solid #a8a8a8; }
.size-grip { width: 9px; height: 9px; margin: 19px 0 0 7px; }

.wallpaper { flex: none; height: 8px; border-top: 1px solid #1c68a7; background: linear-gradient(90deg, #001127, #00152f 30%, #02224a 60%, #031f40 75%, #02244c); }
.taskbar { flex: none; height: 40px; display: flex; gap: 1px; background: #010307; }
.task { width: 48px; height: 40px; }
.task:nth-child(-n+2) { margin-right: -1px; }
.task-gap { width: 1px; }
.open { background: linear-gradient(#76b9ed, #76b9ed) 4px 38px / 40px 2px no-repeat; }
.active { background: linear-gradient(#76b9ed, #76b9ed) 0 38px / 48px 2px no-repeat, #33383c; }
.r-letter { font: bold 38px "Liberation Serif", serif; fill: #fff; }
.p-letter { font: bold 33px "Open Sans", sans-serif; fill: #fff; }
.tray { display: flex; margin-left: auto; color: #fff; }
.tray-people { width: 36px; height: 40px; margin-right: 6px; }
.tray-icon { width: 24px; height: 40px; }
.tray-ime { width: 32px; height: 40px; }
.clock { width: 75px; display: flex; flex-direction: column; align-items: center; padding-top: 2px; line-height: 18px; letter-spacing: .15px; white-space: nowrap; }
.notice { position: relative; width: 49px; border-right: 1px solid #676b70; margin-right: 4px; }
.notice svg { width: 48px; height: 40px; }
.badge { position: absolute; left: 16px; top: 18px; width: 22px; height: 17px; border: 1px solid #8a8a8a; border-radius: 8px; background: #353535; font-size: 12px; line-height: 15px; text-align: center; }
```
